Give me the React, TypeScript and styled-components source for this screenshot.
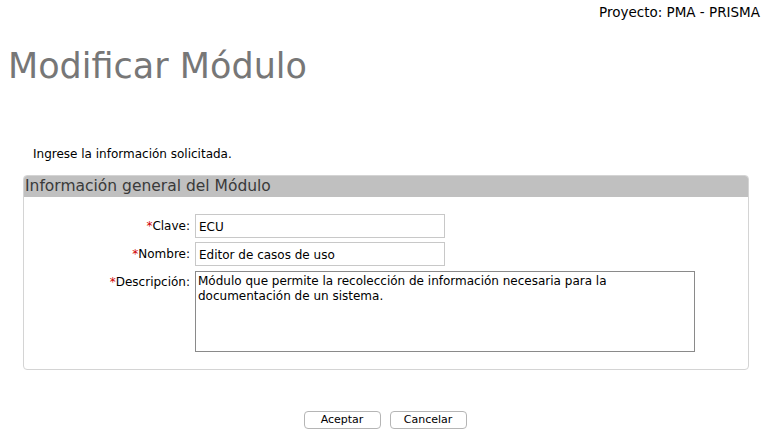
import React from 'react';
import styled, { createGlobalStyle } from 'styled-components';

const GlobalStyle = createGlobalStyle`
  html, body {
    margin: 0;
    padding: 0;
    background: #ffffff;
    font-family: 'DejaVu Sans', Verdana, sans-serif;
    color: #000;
  }
`;

const Page = styled.div`
  width: 765px;
  height: 434px;
  display: flex;
  flex-direction: column;
`;

const TopBar = styled.div`
  display: flex;
  justify-content: flex-end;
  padding: 4px 5px 0 0;
  font-size: 13.5px;
  line-height: 17px;
  height: 17px;
`;

const Title = styled.h1`
  margin: 23px 0 0 8px;
  font-size: 35px;
  font-weight: normal;
  color: #777777;
  line-height: 44px;
`;

const Intro = styled.p`
  margin: 59px 0 0 33px;
  font-size: 12px;
  line-height: 15px;
`;

const Panel = styled.div`
  margin: 13px 0 0 23px;
  width: 724px;
  border: 1px solid #d4d4d4;
  border-radius: 4px;
  overflow: hidden;
`;

const PanelHeader = styled.div`
  background: #c0c0c0;
  color: #3a3a3a;
  font-size: 15.5px;
  line-height: 21px;
  height: 21px;
  padding-left: 1px;
`;

const FormGrid = styled.div`
  display: grid;
  grid-template-columns: 166px 1fr;
  column-gap: 5px;
  row-gap: 4px;
  padding: 17px 0 17px 0;
`;

const Label = styled.label`
  justify-self: end;
  font-size: 12px;
  padding-top: 5px;
  line-height: 15px;
  white-space: nowrap;
`;

const Star = styled.span`
  color: #d00000;
`;

const TextInput = styled.input`
  width: 250px;
  height: 24px;
  box-sizing: border-box;
  border: 1px solid #c8c8c8;
  padding: 2px 3px 0;
  font-family: 'DejaVu Sans', Verdana, sans-serif;
  font-size: 12px;
  color: #000;
  outline: none;
`;

const TextArea = styled.textarea`
  width: 500px;
  height: 81px;
  box-sizing: border-box;
  border: 1px solid #8a8a8a;
  padding: 2px 2px;
  font-family: 'DejaVu Sans', Verdana, sans-serif;
  font-size: 12px;
  line-height: 15px;
  color: #000;
  resize: none;
  outline: none;
  margin-top: 1px;
`;

const Buttons = styled.div`
  display: flex;
  justify-content: center;
  gap: 9px;
  margin: 41px 0 0 23px;
  width: 724px;
`;

const Button = styled.button`
  width: 77px;
  height: 18px;
  box-sizing: border-box;
  background: #ffffff;
  border: 1px solid #b5b5b5;
  border-radius: 4px;
  font-family: 'DejaVu Sans', Verdana, sans-serif;
  font-size: 11px;
  color: #000;
  padding: 0;
  line-height: 16px;
`;

export default function App() {
  return (
    <Page>
      <GlobalStyle />
      <TopBar>Proyecto: PMA - PRISMA</TopBar>
      <Title>Modificar Módulo</Title>
      <Intro>Ingrese la información solicitada.</Intro>
      <Panel>
        <PanelHeader>Información general del Módulo</PanelHeader>
        <FormGrid>
          <Label>
            <Star>*</Star>Clave:
          </Label>
          <TextInput defaultValue="ECU" />
          <Label>
            <Star>*</Star>Nombre:
          </Label>
          <TextInput defaultValue="Editor de casos de uso" />
          <Label>
            <Star>*</Star>Descripción:
          </Label>
          <TextArea defaultValue="Módulo que permite la recolección de información necesaria para la documentación de un sistema." />
        </FormGrid>
      </Panel>
      <Buttons>
        <Button>Aceptar</Button>
        <Button>Cancelar</Button>
      </Buttons>
    </Page>
  );
}
